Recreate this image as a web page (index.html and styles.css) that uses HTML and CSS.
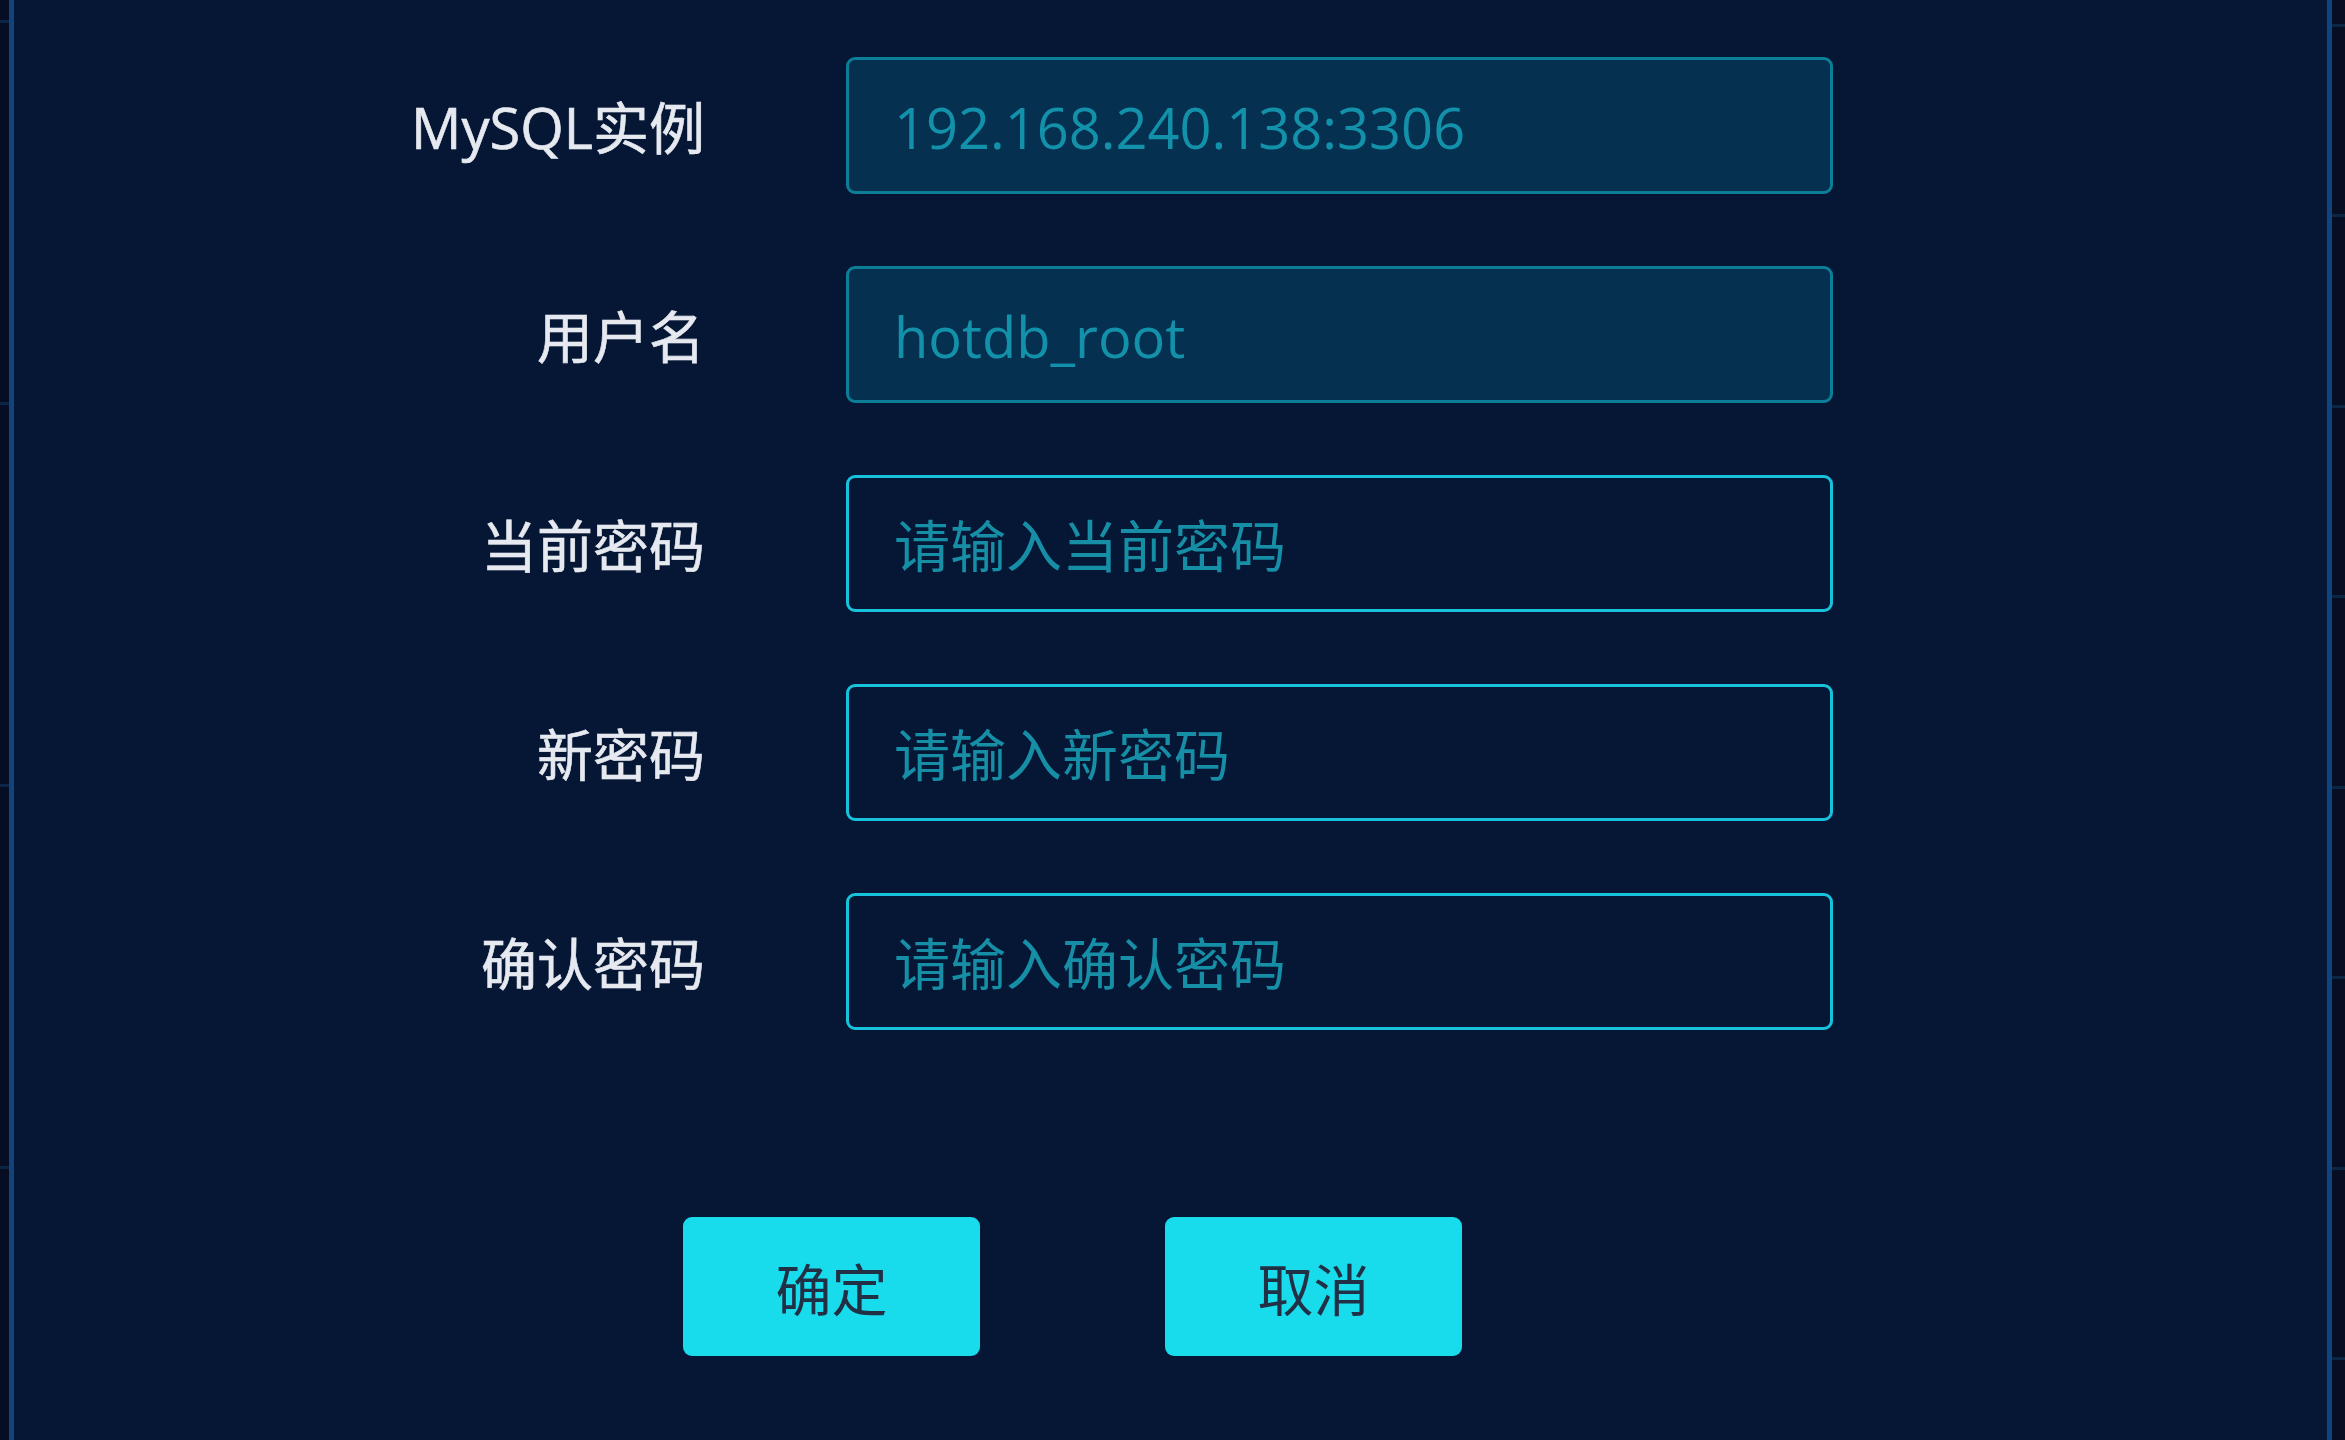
FILE: index.html
```html
<!DOCTYPE html>
<html lang="zh-CN">
<head>
<meta charset="utf-8">
<title>修改密码</title>
<link rel="stylesheet" href="styles.css">
</head>
<body>
<div class="screen">
  <div class="strip strip-left"></div>
  <div class="modal">
    <form class="form">
      <div class="row">
        <label class="label">MySQL实例</label>
        <input class="field field-disabled" type="text" value="192.168.240.138:3306" disabled>
      </div>
      <div class="row">
        <label class="label">用户名</label>
        <input class="field field-disabled" type="text" value="hotdb_root" disabled>
      </div>
      <div class="row">
        <label class="label">当前密码</label>
        <input class="field" type="password" placeholder="请输入当前密码">
      </div>
      <div class="row">
        <label class="label">新密码</label>
        <input class="field" type="password" placeholder="请输入新密码">
      </div>
      <div class="row">
        <label class="label">确认密码</label>
        <input class="field" type="password" placeholder="请输入确认密码">
      </div>
      <div class="actions">
        <button type="button" class="btn">确定</button>
        <button type="button" class="btn">取消</button>
      </div>
    </form>
  </div>
  <div class="strip strip-right"></div>
</div>
</body>
</html>
```

FILE: styles.css
```css
html, body {
  margin: 0;
  padding: 0;
  background: #070e24;
}

body {
  font-family: "Open Sans", "Noto Sans CJK SC", sans-serif;
  overflow: hidden;
}

.screen {
  display: flex;
  width: 2345px;
  height: 1440px;
}

.strip {
  height: 100%;
  background-color: #070e24;
}

.strip-left {
  width: 9px;
  background-image: repeating-linear-gradient(to bottom,
    transparent 0, transparent 20px,
    #0d2544 20px, #0d2544 23px,
    transparent 23px, transparent 382px);
}

.strip-right {
  flex: 1;
  background-image: repeating-linear-gradient(to bottom,
    transparent 0, transparent 24px,
    #0d2544 24px, #0d2544 27px,
    transparent 27px, transparent 190.5px);
}

.modal {
  width: 2313px;
  height: 100%;
  background: #061736;
  border-left: 5px solid #11437c;
  border-right: 5px solid #11437c;
}

.form {
  display: flex;
  flex-direction: column;
  padding-top: 57px;
}

.row {
  display: grid;
  grid-template-columns: 691px 987px;
  column-gap: 141px;
  align-items: center;
  height: 137px;
  margin-bottom: 72px;
}

.row:nth-child(5) {
  margin-bottom: 0;
}

.label {
  text-align: right;
  color: #e6eaf0;
  font-size: 56px;
  line-height: 1;
  padding-top: 2px;
  -webkit-text-stroke: 0.6px #e6eaf0;
}

.field {
  box-sizing: border-box;
  width: 987px;
  height: 137px;
  margin: 0;
  padding: 2px 0 0 45px;
  border: 3px solid #16c3db;
  border-radius: 9px;
  background: #061736;
  color: #1690a8;
  font-family: "Open Sans", "Noto Sans CJK SC", sans-serif;
  font-size: 56px;
  outline: none;
}

.field::placeholder {
  color: #168ea6;
  opacity: 1;
}

.field-disabled {
  background: #05304f;
  border-color: #0d7e97;
  color: #1390aa;
  -webkit-text-fill-color: #1390aa;
  opacity: 1;
}

.actions {
  display: flex;
  gap: 185px;
  padding-left: 669px;
  margin-top: 187px;
}

.btn {
  width: 297px;
  height: 139px;
  border: none;
  border-radius: 9px;
  background: #18dcec;
  color: #223046;
  font-family: "Noto Sans CJK SC", sans-serif;
  font-size: 56px;
  padding: 0;
  cursor: pointer;
}
```
